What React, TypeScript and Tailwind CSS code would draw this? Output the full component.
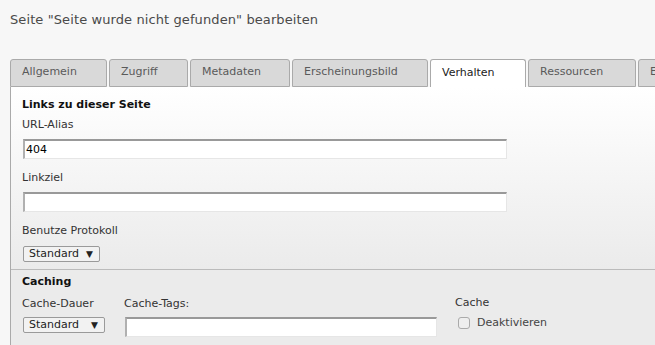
import React from "react";

const tabs = [
  { label: "Allgemein", w: "w-[97px]" },
  { label: "Zugriff", w: "w-[79px]" },
  { label: "Metadaten", w: "w-[100px]" },
  { label: "Erscheinungsbild", w: "w-[136px]" },
  { label: "Verhalten", w: "w-[96px]" },
  { label: "Ressourcen", w: "w-[108px]" },
  { label: "Erweitert", w: "w-[92px]" },
];
const activeTab = "Verhalten";

function Select({ width }: { width: string }) {
  return (
    <div
      className={`${width} ml-[1px] h-[16px] flex items-center justify-between pl-[5px] pr-[6px] border border-[#9a9a9a] rounded-[2px] bg-[#f2f2f2] text-[11px] leading-[14px] text-[#222]`}
    >
      <span>Standard</span>
      <span className="text-[9px] leading-[9px]">▼</span>
    </div>
  );
}

function TextInput({ width, value }: { width: string; value?: string }) {
  return (
    <div
      className={`${width} ml-[1px] h-[20px] bg-white border-t-2 border-l-2 border-t-[#999] border-l-[#b0b0b0] border-r border-b border-r-[#e6e6e6] border-b-[#e6e6e6] flex items-center pl-[1px] text-[11px] text-black`}
    >
      {value}
    </div>
  );
}

export default function App() {
  return (
    <div
      className="w-[655px] h-[345px] overflow-hidden bg-[#f7f7f7] text-[#333]"
      style={{ fontFamily: '"DejaVu Sans", Verdana, sans-serif' }}
    >
      {/* Title */}
      <div className="pt-[12px] pl-[10px] text-[13px] leading-[16px] text-[#4a4a4a] whitespace-nowrap tracking-[0.1px]">
        Seite "Seite wurde nicht gefunden" bearbeiten
      </div>

      {/* Tabs */}
      <div className="mt-[31px] ml-[10px] flex gap-[2px] whitespace-nowrap">
        {tabs.map((t) =>
          t.label === activeTab ? (
            <div
              key={t.label}
              className={`${t.w} shrink-0 h-[28px] flex items-center pl-[11px] border border-b-0 border-[#aaa] rounded-t-[3px] bg-white text-[11px] text-[#222]`}
            >
              {t.label}
            </div>
          ) : (
            <div
              key={t.label}
              className={`${t.w} shrink-0 h-[28px] flex items-center pb-[1px] pl-[11px] border border-[#aaa] rounded-t-[3px] bg-[#d9d9d9] text-[11px] text-[#5a5a5a]`}
            >
              {t.label}
            </div>
          )
        )}
      </div>

      {/* Panel */}
      <div className="ml-[10px] border-l border-[#aaa]">
        {/* Links zu dieser Seite */}
        <div className="pt-[11px] pb-[7px] pl-[11px] bg-linear-to-b from-white to-[#ebebeb] text-[11px] leading-[14px]">
          <div className="font-bold text-[#111]">Links zu dieser Seite</div>
          <div className="mt-[6px]">URL-Alias</div>
          <div className="mt-[7px]">
            <TextInput width="w-[484px]" value="404" />
          </div>
          <div className="mt-[12px]">Linkziel</div>
          <div className="mt-[7px]">
            <TextInput width="w-[484px]" />
          </div>
          <div className="mt-[12px]">Benutze Protokoll</div>
          <div className="mt-[8px]">
            <Select width="w-[77px]" />
          </div>
        </div>

        {/* Caching */}
        <div className="border-t border-[#bbb] bg-[#ebebeb] pt-[5px] pb-[10px] pl-[11px] text-[11px] leading-[14px]">
          <div className="font-bold text-[#111]">Caching</div>
          <div className="mt-[8px] flex">
            <div className="w-[102px]">
              <div>Cache-Dauer</div>
              <div className="mt-[6px]">
                <Select width="w-[82px]" />
              </div>
            </div>
            <div className="w-[331px]">
              <div>Cache-Tags:</div>
              <div className="mt-[6px]">
                <TextInput width="w-[312px]" />
              </div>
            </div>
            <div className="-mt-[1px]">
              <div>Cache</div>
              <label className="mt-[6px] ml-[3px] flex items-center gap-[7px] text-[#444]">
                <span className="w-[12px] h-[12px] rounded-[3px] border border-[#aaa] bg-[#eeeeee]" />
                <span>Deaktivieren</span>
              </label>
            </div>
          </div>
        </div>
      </div>
    </div>
  );
}
